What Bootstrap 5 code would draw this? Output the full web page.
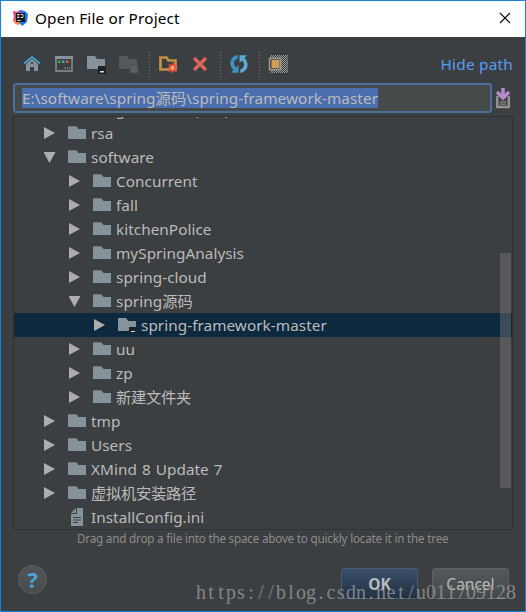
<!DOCTYPE html>
<html lang="en">
<head>
<meta charset="utf-8">
<title>Open File or Project</title>
<link href="https://cdn.jsdelivr.net/npm/bootstrap@5.3.0/dist/css/bootstrap.min.css" rel="stylesheet">
<style>
body{margin:0;background:#3c3f41;font-family:"Noto Sans","Noto Sans CJK SC",sans-serif;font-size:15.3px;line-height:24px;color:#bbb;overflow:hidden}
svg{display:block;flex:none}
.dialog{width:526px;height:612px;border:1px solid #1883d7}
.titlebar{height:36px;background:#fff;color:#000;padding:0 13px 2px 12px}
.title-text{margin-left:7px;letter-spacing:.17px}
.tools{height:46px;padding:8px 12px 0 22px}
.tools .slot{width:20px;height:20px;margin-right:12px}
.sep{width:1px;height:25px;margin-left:-2px;background:repeating-linear-gradient(#777a7c 0 1px,transparent 1px 3px)}
.hide-path{color:#589df6;text-decoration:none;letter-spacing:.25px}
.path-row{padding-left:12px;height:30px}
.path-box{width:479px;height:30px;border:2px solid #4b6f9b;border-radius:3px;background:#45494a;padding:0 7px}
.path-sel{background:#4b6eaf;height:20px;line-height:20px;white-space:nowrap;letter-spacing:.06px}
.drop-in{margin-left:4px}
.tree{width:500px;height:414px;margin:3px 0 0 12px;border:1px solid #303233;overflow:hidden}
.tree-rows{margin-top:-20px}
.node{height:24px;padding-left:30px;white-space:nowrap;letter-spacing:.05px}
.node.lv2{padding-left:55px}
.node.lv3{padding-left:80px}
.node.picked{background:#0d293e}
.node .arrow{margin-right:12px}
.node .pic{margin-right:4px}
.node .han{letter-spacing:-.3px}
.node .spaced{word-spacing:1px}
.thumb{right:1px;top:136px;width:11px;height:235px;background:rgba(125,125,125,.42)}
.hint{font-size:11.7px;line-height:16px;color:#8c8c8c;padding-left:76px;white-space:nowrap;letter-spacing:-.21px}
.foot{padding:19px 16px 0 17px;height:64px}
.help{width:29px;height:29px;border-radius:50%;border:1px solid #5b5f61;background:linear-gradient(#515658,#464b4d);color:#4fa3d1;font-weight:700;font-size:22px;line-height:27px}
.push{width:77px;height:31px;border:1px solid #5c6062;border-radius:3px;padding:0;margin:3px 0 0 14px;font-size:15.5px;line-height:28px;color:#bbb;background:linear-gradient(#53585a,#45494b)}
.push.main{font-weight:700;background:linear-gradient(#384f6b,#233143);border-color:#4c5a69}
.stamp{left:190px;top:577px;pointer-events:none}
</style>
<script src="https://cdn.jsdelivr.net/npm/bootstrap@5.3.0/dist/js/bootstrap.bundle.min.js"></script>
</head>
<body>
<svg width="0" height="0" class="position-absolute">
<defs>
<symbol id="right" viewBox="0 0 12 14"><path d="M0 1v12L11 7z" fill="#adadad"/></symbol>
<symbol id="down" viewBox="0 0 12 14"><path d="M-.5 2h12L5.500 13z" fill="#adadad"/></symbol>
<symbol id="folder" viewBox="0 0 19 15"><path d="M0 14V1h8l2.500 3H18v10z" fill="#87939a"/><path d="M0 1h7.500l1 1H0z" fill="#6d787e"/></symbol>
<symbol id="module" viewBox="0 0 19 16"><path d="M0 14V1h8l2.500 3H18v6h-6v4z" fill="#87939a"/><path d="M11 10h7v6h-7z" fill="#1f2225"/><path d="M13 14h4v1h-4z" fill="#ddd"/></symbol>
</defs>
</svg>
<main class="dialog d-flex flex-column position-relative">
<header class="titlebar d-flex align-items-center">
<svg width="15" height="16" viewBox="0 0 15 16"><path d="M0 1l5 1 2 8-4 4-3-3 1-4z" fill="#ed3d73"/><path d="M0 10l5-1 3 5-4 1z" fill="#f58b42"/><path d="M7 0l5 1 3 3-1 8-5 4-3-4z" fill="#087cfa"/><path d="M5 1l3-1 1 4-5 1z" fill="#a448b5"/><path d="M3 3h9v9H3z" fill="#151515"/><path d="M4 4.500h2.500M5.200 4.500v3M4 7.500h2.500M7.500 4.500h2.500v3H7.500M4 10.500h4" stroke="#eee" stroke-width=".8" fill="none"/></svg>
<span class="title-text">Open File or Project</span>
<svg class="ms-auto" width="14" height="14" viewBox="0 0 14 14"><path d="M2 2l10 10M12 2L2 12" stroke="#000" stroke-width="1.100"/></svg>
</header>
<div class="tools d-flex align-items-center">
<svg class="slot" viewBox="0 0 20 20"><path d="M3 10l6-5 6 5v7h-4v-4H7v4H3z" fill="#87939a"/><path d="M1 9.500L9 3l8 6.500" fill="none" stroke="#3b9fc4" stroke-width="1.900"/><path d="M8 8h2v2H8z" fill="#3c3f41"/></svg>
<svg class="slot" viewBox="0 0 20 20"><path d="M1 3h16v14H1z" fill="none" stroke="#87939a" stroke-width="1.500"/><path d="M0 2h18v3H0z" fill="#87939a"/><path d="M3 6.500h2.500V9H3z" fill="#56a62b"/><path d="M7 6.500h2.500V9H7z" fill="#389fd6"/><path d="M11 6.500h2.500V9H11z" fill="#e36233"/><path d="M9.500 14h6" stroke="#b5babd" stroke-dasharray="1.200 1"/></svg>
<svg class="slot" viewBox="0 0 20 20"><path d="M0 15V2h8l2 3h8v10z" fill="#87939a"/><path d="M11 12h8v8h-8z" fill="#202122"/><path d="M13 17h4v1.500h-4z" fill="#ddd"/></svg>
<svg class="slot" viewBox="0 0 20 20"><path d="M0 15V2h8l2 3h8v10z" fill="#54585a"/><path d="M11 11h8v8h-8z" fill="#5b5d5e" stroke="#484b4d" stroke-width=".7"/></svg>
<div class="sep"></div>
<svg class="slot ms-2" viewBox="0 0 20 20"><path d="M2.500 15.500V3.500h6l2 3h7v9z" fill="none" stroke="#c2914c" stroke-width="2.700"/><path d="M14.500 8l1.100 3 2.900-1.200-1 2.900 2.500 1.300-2.500 1.300 1 2.800-2.900-1.200-1.100 3-1.100-3-2.900 1.200 1-2.800L9 14l2.500-1.300-1-2.900 2.900 1.200z" fill="#f05340"/><circle cx="14.500" cy="14" r="1.700" fill="#ffbb65"/></svg>
<svg class="slot" viewBox="0 0 20 20"><path d="M4 4l12 12M16 4L4 16" stroke="#df6559" stroke-width="3.200"/></svg>
<div class="sep"></div>
<svg class="slot ms-2" viewBox="0 0 20 20"><path d="M8.800 1C1 2 -1 11 4.500 16L2 18.800h7.500V11L7 13.500C3.500 10 5 5.500 8.800 4.500z" fill="#3f91c1"/><path d="M11.200 19C19 18 21 9 15.500 4L18 1.200h-7.500V9L13 6.500c3.500 3.500 2 8-1.800 9z" fill="#5caad3"/></svg>
<div class="sep"></div>
<svg class="slot ms-2" viewBox="0 0 20 20"><defs><pattern id="chk" width="2" height="2" patternUnits="userSpaceOnUse"><path d="M0 0h1v1H0zM1 1h1v1H1z" fill="#999"/></pattern></defs><path d="M2 1h18v18H2z" fill="url(#chk)"/><path d="M1.500 4.500h11v11h-11z" fill="#3c3f41" stroke="#999" stroke-width="1.500"/><path d="M3.500 6h8v8h-8z" fill="#d2a055"/></svg>
<a class="hide-path ms-auto" href="#">Hide path</a>
</div>
<div class="path-row d-flex align-items-center">
<div class="path-box d-flex align-items-center"><span class="path-sel">E:\software\spring源码\spring-framework-master</span></div>
<svg class="drop-in" width="14" height="22" viewBox="0 0 14 22"><path d="M1.300 9v11h11.500V9" fill="none" stroke="#939393" stroke-width="2.500"/><path d="M4 14h6v4H4z" fill="#777"/><path d="M5 16h4" stroke="#444"/><path d="M7 1v9M1 5l6 6 6-6" fill="none" stroke="#b58ac8" stroke-width="3.500"/></svg>
</div>
<section class="tree position-relative">
<div class="tree-rows" id="rows"></div>
<div class="thumb position-absolute"></div>
</section>
<div class="hint">Drag and drop a file into the space above to quickly locate it in the tree</div>
<footer class="foot d-flex align-items-start">
<div class="help text-center me-auto">?</div>
<button class="btn push main">OK</button>
<button class="btn push">Cancel</button>
</footer>
<svg class="stamp position-absolute" width="334" height="32"><text id="stampText" y="21" font-family="Liberation Serif,serif" font-size="20" text-anchor="middle" fill="#96999a" fill-opacity=".8">https://blog.csdn.net/u011709128</text></svg>
</main>
<script>
const nodes=[[1,'r','Program Files (x86)'],[1,'r','rsa'],[1,'d','software'],[2,'r','Concurrent'],[2,'r','fall'],[2,'r','kitchenPolice'],[2,'r','mySpringAnalysis'],[2,'r','spring-cloud'],[2,'d','spring源码'],[3,'r','spring-framework-master'],[2,'r','uu'],[2,'r','zp'],[2,'r','新建文件夹','han'],[1,'r','tmp'],[1,'r','Users'],[1,'r','XMind 8 Update 7','spaced'],[1,'r','虚拟机安装路径','han'],[1,'','InstallConfig.ini']];
document.getElementById('rows').innerHTML=nodes.map(([lv,a,name,cls=''])=>{
const arrow=a?`<svg class="arrow" width="12" height="14"><use href="#${a==='r'?'right':'down'}"/></svg>`:'<svg class="arrow" width="12" height="14"></svg>';
const pic=!a?'<svg class="pic" width="19" height="20" viewBox="0 0 19 20"><path d="M9 1h6v18H3V7h6z" fill="#87939a"/><path d="M3 6l5-5v5z" fill="#87939a"/><path d="M5 10.500h8M5 13h8M5 15.500h5" stroke="#3c3f41"/></svg>':`<svg class="pic" width="19" height="16"><use href="#${lv===3?'module':'folder'}" width="19" height="${lv===3?16:15}"/></svg>`;
return `<div class="node lv${lv} d-flex align-items-center ${lv===3?'picked':''}">${arrow}${pic}<span class="${cls}">${name}</span></div>`}).join('');
document.getElementById('stampText').setAttribute('x',Array.from({length:32},(_,i)=>10+i*10).join(' '));
</script>
</body>
</html>
